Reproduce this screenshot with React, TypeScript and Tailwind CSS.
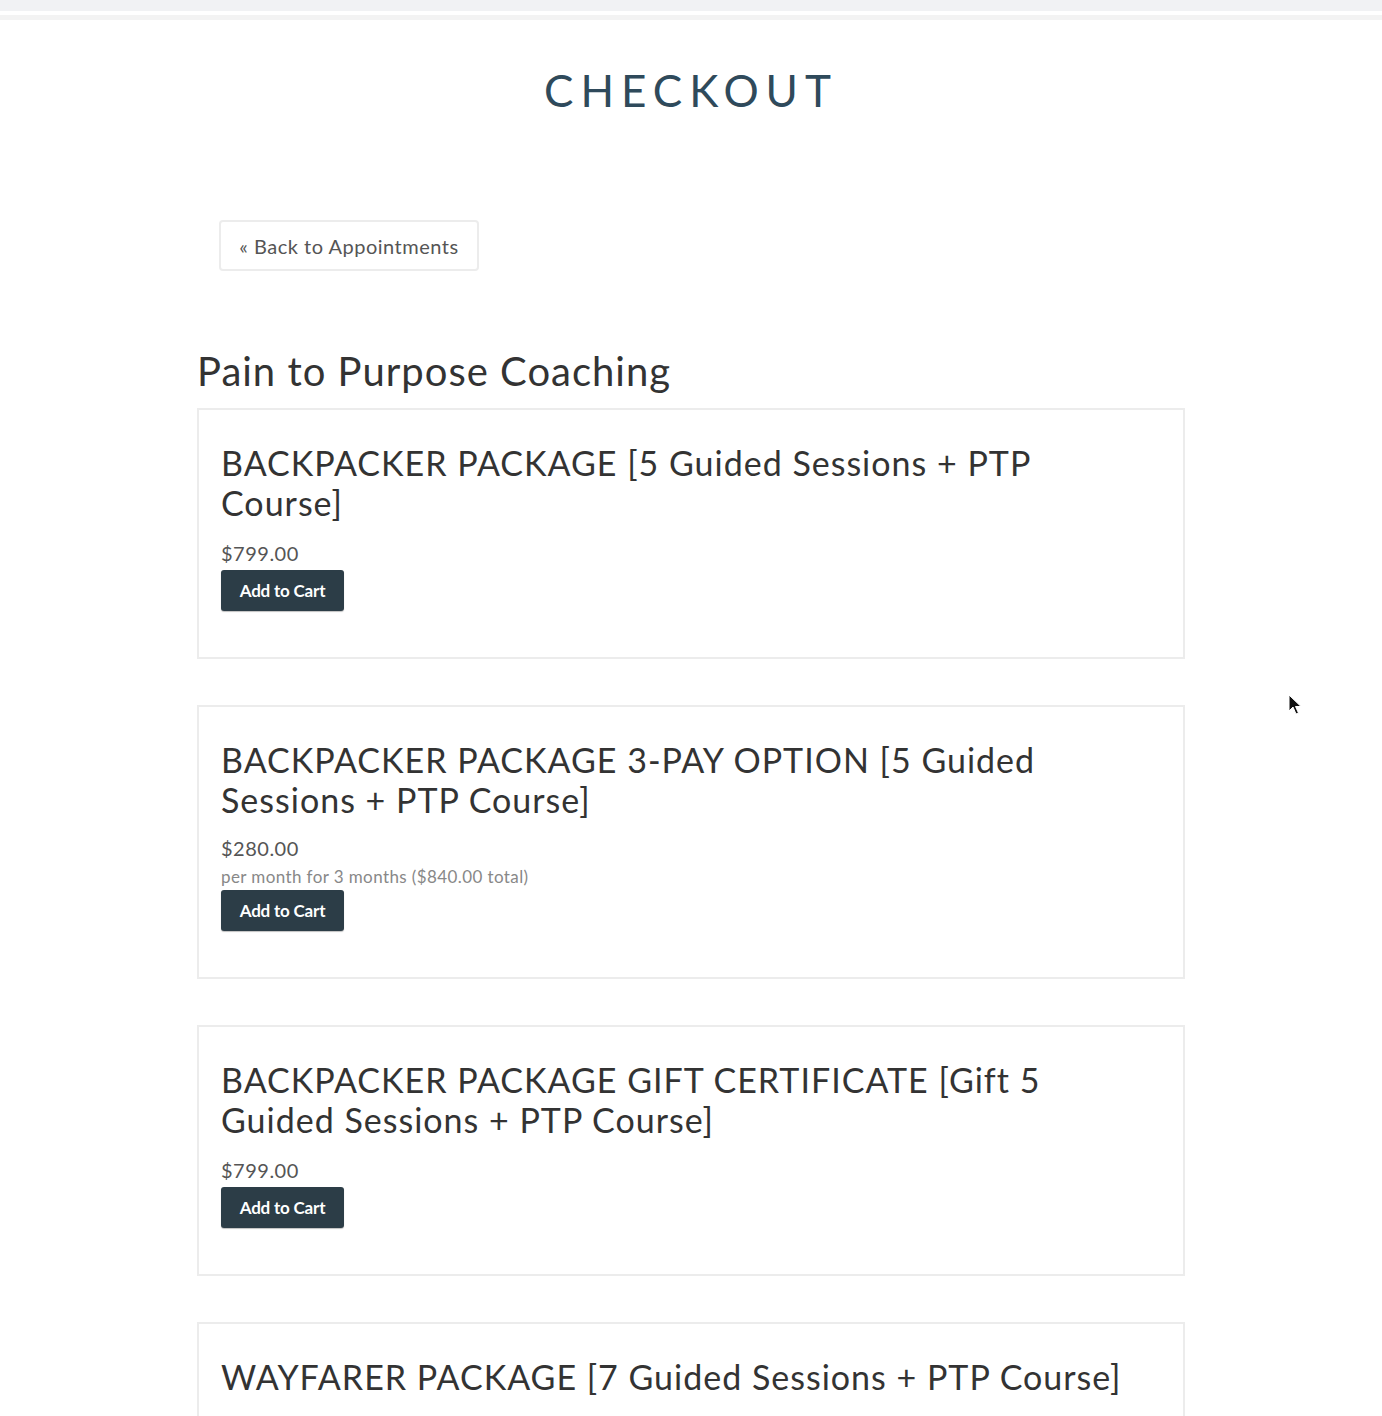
import React from "react";

type Pkg = {
  title: string;
  price: string;
  note?: string;
};

const packages: Pkg[] = [
  { title: "BACKPACKER PACKAGE [5 Guided Sessions + PTP Course]", price: "$799.00" },
  {
    title: "BACKPACKER PACKAGE 3-PAY OPTION [5 Guided Sessions + PTP Course]",
    price: "$280.00",
    note: "per month for 3 months ($840.00 total)",
  },
  { title: "BACKPACKER PACKAGE GIFT CERTIFICATE [Gift 5 Guided Sessions + PTP Course]", price: "$799.00" },
  { title: "WAYFARER PACKAGE [7 Guided Sessions + PTP Course]", price: "$999.00" },
];

function PackageCard({ pkg }: { pkg: Pkg }) {
  return (
    <div className="border-2 border-[#ececec] bg-white px-[22px] pt-[33px] pb-[46px]">
      <h3 className="text-[34px] leading-[40px] text-[#333333] tracking-[1px]">{pkg.title}</h3>
      <p className={`${pkg.note ? "mt-[17px]" : "mt-[19px]"} text-[20px] leading-[22px] text-[#555555] tracking-[0.5px]`}>
        {pkg.price}
      </p>
      {pkg.note && (
        <p className="mt-[9px] text-[17px] leading-[18px] text-[#888888] tracking-[0.4px]">{pkg.note}</p>
      )}
      <button
        className={`${pkg.note ? "mt-[4px]" : "mt-[6px]"} block h-[41px] w-[123px] rounded-[3px] bg-[#2c3d47] text-[17px] font-bold text-white tracking-[-0.2px] shadow-[0_1px_1px_rgba(0,0,0,0.25)]`}
      >
        Add to Cart
      </button>
    </div>
  );
}

export default function App() {
  return (
    <div
      className="relative min-h-[1416px] bg-white overflow-hidden"
      style={{ fontFamily: "Lato, 'Liberation Sans', sans-serif" }}
    >
      {/* browser chrome strip */}
      <div className="h-[11px] bg-[#f1f2f4]" />
      <div className="h-[4px] bg-white" />
      <div className="h-[5px] bg-[#f3f3f3]" />

      <h1 className="mt-[44px] text-center text-[44px] leading-[53px] tracking-[7px] text-[#2f4a5b]">
        CHECKOUT
      </h1>

      <div className="mx-auto w-[988px] pt-[103px]">
        <div className="pl-[22px]">
          <button className="h-[51px] w-[260px] rounded-[4px] border-2 border-[#ececec] bg-white text-[20px] text-[#555555] tracking-[0.5px]">
            « Back to Appointments
          </button>
        </div>

        <h2 className="mt-[76px] text-[40px] leading-[48px] text-[#333333] tracking-[1px]">Pain to Purpose Coaching</h2>

        <div className="mt-[13px] flex flex-col gap-[46px]">
          {packages.map((p) => (
            <PackageCard key={p.title} pkg={p} />
          ))}
        </div>
      </div>

      {/* mouse pointer */}
      <svg className="absolute left-[1288px] top-[694px]" width="14" height="22" viewBox="0 0 14 22">
        <path d="M1 1 L1 17 L5 13 L8 20 L10.5 19 L7.5 12.5 L13 12.5 Z" fill="#111" stroke="#fff" strokeWidth="1" />
      </svg>
    </div>
  );
}
